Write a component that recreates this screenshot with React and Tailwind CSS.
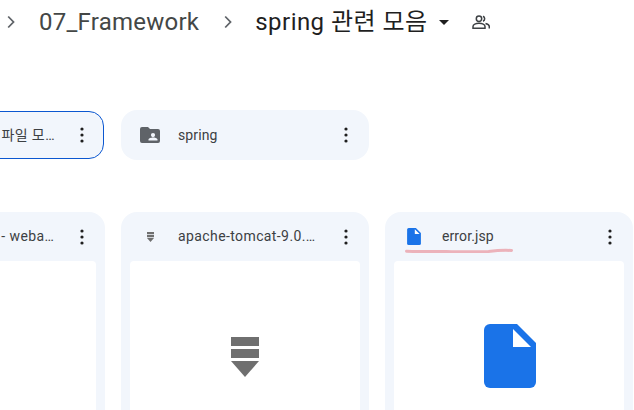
const font = { fontFamily: "Roboto, 'Noto Sans CJK KR', sans-serif" };

function Chevron({ className }) {
  return (
    <svg viewBox="0 0 8 14" className={className} fill="none" stroke="#5f6368" strokeWidth="1.8">
      <path d="M1.2 1.5 6.5 7l-5.3 5.5" />
    </svg>
  );
}

function Dots() {
  return (
    <svg viewBox="0 0 4 16" className="w-1 h-4 shrink-0" fill="#1f1f1f">
      <circle cx="2" cy="2" r="1.6" />
      <circle cx="2" cy="8" r="1.6" />
      <circle cx="2" cy="14" r="1.6" />
    </svg>
  );
}

function SharedIcon() {
  return (
    <svg viewBox="0 0 18 14" className="ml-[23px] w-[18px] h-[14px]" fill="none" stroke="#3c4043" strokeWidth="1.5">
      <circle cx="7" cy="3.7" r="2.7" />
      <path d="M1 13.200v-1.700c0-2 3-3.300 6-3.300s6 1.300 6 3.300v1.700z" />
      <path d="M11 1.200a2.700 2.700 0 0 1 0 5" />
      <path d="M13.500 8.400c2 .5 3.800 1.500 3.800 3.100v2" />
    </svg>
  );
}

function FolderIcon() {
  return (
    <svg viewBox="0 0 20 16" className="w-5 h-4 shrink-0">
      <path
        fill="#5f6368"
        fillRule="evenodd"
        d="M2 0h6l2 2h8a2 2 0 0 1 2 2v10a2 2 0 0 1-2 2H2a2 2 0 0 1-2-2V2a2 2 0 0 1 2-2zm11 6a2.100 2.100 0 1 0 0 4.200A2.100 2.100 0 0 0 13 6zm-4.500 7.500h9v-.9c0-1.300-3-2-4.500-2s-4.500.7-4.500 2z"
      />
    </svg>
  );
}

function ZipIcon({ className }) {
  return (
    <svg viewBox="0 0 28 40" className={className} fill="#6f6f6f">
      <rect x="0" y="0" width="28" height="9" />
      <rect x="0" y="12" width="28" height="9" />
      <path d="M0 24h28L14 40z" />
    </svg>
  );
}

function FileIcon({ className }) {
  return (
    <svg viewBox="0 0 52 64" className={className}>
      <path
        fill="#1a73e8"
        d="M6 0h27l19 19v39a6 6 0 0 1-6 6H6a6 6 0 0 1-6-6V6a6 6 0 0 1 6-6z"
      />
      <path fill="#ffffff" d="M29 5v18h18z" />
    </svg>
  );
}

function FolderCard({ name, selected, icon, wide }) {
  return (
    <div
      className={`shrink-0 flex items-center bg-[#f2f6fc] ${
        selected
          ? "w-[246px] h-[48px] mx-px rounded-[15px] border border-[#0b57d0] pl-[17px] pr-[19px]"
          : "w-[248px] h-[50px] rounded-2xl pl-[19px] pr-[21px]"
      }`}
    >
      <div className="w-5 shrink-0 flex justify-center">{icon}</div>
      <span className={`ml-[18px] w-[142px] truncate text-[14px] text-[#3c4043] ${wide ? "tracking-[0.4px]" : "tracking-[0.1px]"}`}>
        {name}
      </span>
      <div className="ml-auto">
        <Dots />
      </div>
    </div>
  );
}

function FileCard({ name, icon, preview, wide, children }) {
  return (
    <div className="relative w-[248px] h-[240px] shrink-0 rounded-2xl bg-[#f2f6fc] px-[9px]">
      <div className="h-[49px] flex items-center pl-[10px] pr-[12px]">
        <div className="w-5 shrink-0 flex justify-center">{icon}</div>
        <span className={`ml-[18px] w-[142px] truncate text-[14px] text-[#3c4043] ${wide ? "tracking-[0.4px]" : "tracking-[0.1px]"}`}>
          {name}
        </span>
        <div className="ml-auto">
          <Dots />
        </div>
      </div>
      <div className="bg-white rounded h-[190px] flex justify-center">{preview}</div>
      {children}
    </div>
  );
}

export default function App() {
  return (
    <div className="w-[634px] h-[410px] overflow-hidden bg-white" style={font}>
      {/* breadcrumb */}
      <div className="h-[44px] flex items-center text-[24px] leading-[44px] text-[#1f1f1f] whitespace-nowrap">
        <Chevron className="ml-[7px] w-[8px] h-[14px]" />
        <span className="ml-[24px] tracking-[0.25px] text-[#444746]">07_Framework</span>
        <Chevron className="ml-[25px] w-[8px] h-[14px]" />
        <span className="ml-[23px] tracking-[0.45px]">spring 관련 모음</span>
        <svg viewBox="0 0 10 5" className="ml-[12px] w-[10px] h-[5px]" fill="#1f1f1f">
          <path d="M0 0h10L5 5z" />
        </svg>
        <SharedIcon />
      </div>

      {/* folders */}
      <div className="mt-[66px] ml-[-143px] flex items-center gap-4">
        <FolderCard name="스프링 프레임 파일 모음입니다" selected wide icon={<FolderIcon />} />
        <FolderCard name="spring" icon={<FolderIcon />} />
      </div>

      {/* files */}
      <div className="mt-[52px] ml-[-143px] flex gap-4">
        <FileCard
          name="spring-board - webapp.war"
          wide
          icon={<ZipIcon className="w-[7px] h-[10px]" />}
          preview={null}
        />
        <FileCard
          name="apache-tomcat-9.0.85-windows.zip"
          wide
          icon={<ZipIcon className="w-[7px] h-[10px]" />}
          preview={<ZipIcon className="mt-[76px] w-7 h-10" />}
        />
        <FileCard
          name="error.jsp"
          icon={<FileIcon className="w-[14px] h-[17px]" />}
          preview={<FileIcon className="mt-[63px] w-[52px] h-16 translate-x-[1px]" />}
        >
          <svg viewBox="0 0 108 6" className="absolute left-[20px] top-[35px] w-[108px] h-[6px]" fill="none">
            <path
              d="M1.500 4.200c14 .5 26 .3 40 .4s28 .3 42-.2c8-.9 14-1.400 23-.9"
              stroke="#e8868e"
              strokeOpacity="0.6"
              strokeWidth="3"
              strokeLinecap="round"
            />
          </svg>
        </FileCard>
      </div>
    </div>
  );
}
